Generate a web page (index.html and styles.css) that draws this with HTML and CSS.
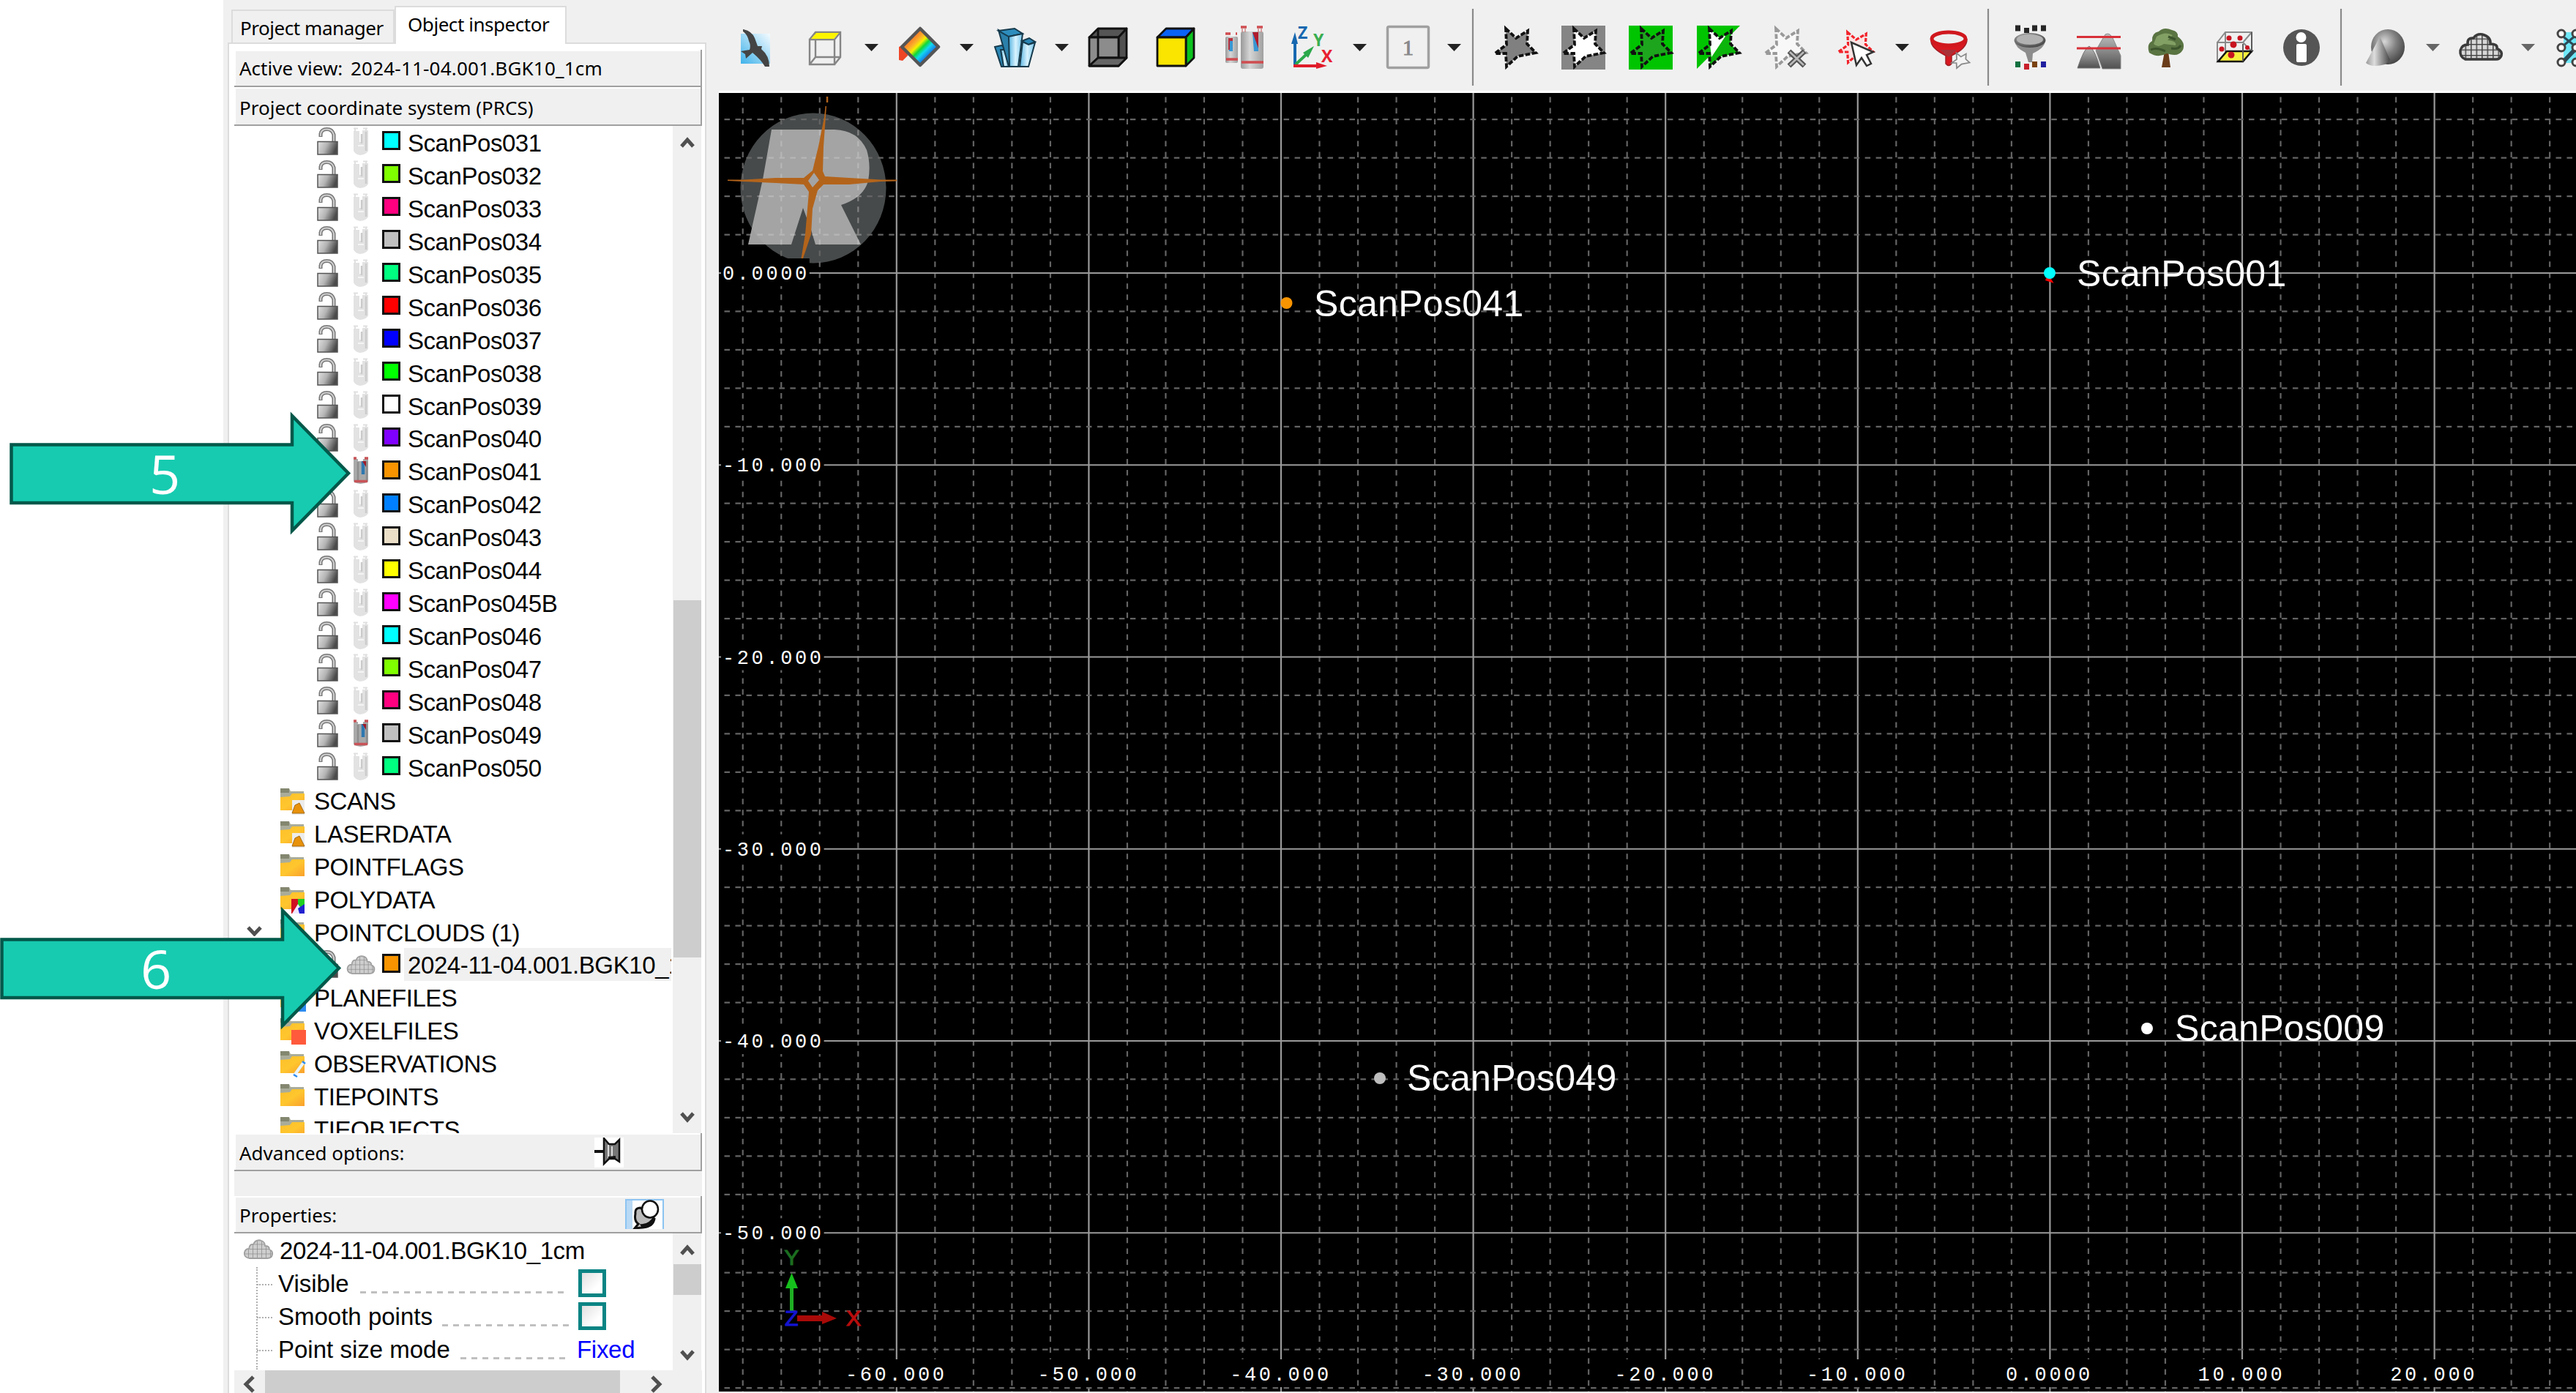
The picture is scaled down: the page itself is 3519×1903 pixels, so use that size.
FILE: index.html
```html
<!DOCTYPE html>
<html lang="en">
<head>
<meta charset="utf-8">
<title>Object inspector</title>
<link rel="stylesheet" href="styles.css">
</head>
<body>
<svg class="defs" width="0" height="0">
  <defs>
    <linearGradient id="gLock" x1="0" x2="1" y1="0" y2=".3"><stop offset="0" stop-color="#e4e4e4"/><stop offset=".5" stop-color="#b4b4b4"/><stop offset="1" stop-color="#4a4a4a"/></linearGradient>
    <linearGradient id="gFolder" x1="0" x2="1" y1="0" y2="1"><stop offset="0" stop-color="#fdc02a"/><stop offset=".5" stop-color="#ffc62e"/><stop offset="1" stop-color="#f9a02c"/></linearGradient>
    <linearGradient id="gSky" x1="1" x2="0" y1="0" y2="1"><stop offset="0" stop-color="#f4fbff"/><stop offset="1" stop-color="#3fb2ea"/></linearGradient>
    <linearGradient id="gRain" x1=".2" y1=".2" x2=".8" y2=".8"><stop offset="0" stop-color="#f4582a"/><stop offset=".3" stop-color="#fbb32a"/><stop offset=".42" stop-color="#f8f000"/><stop offset=".56" stop-color="#10d838"/><stop offset=".7" stop-color="#10d8f0"/><stop offset="1" stop-color="#2038e0"/></linearGradient>
    <linearGradient id="gIce" x1="0" x2="1"><stop offset="0" stop-color="#58b4e0"/><stop offset=".5" stop-color="#d8f3ff"/><stop offset="1" stop-color="#70c2e8"/></linearGradient>
    <linearGradient id="gTube" x1="0" x2="1"><stop offset="0" stop-color="#999"/><stop offset=".4" stop-color="#d6d6d6"/><stop offset="1" stop-color="#a0a0a0"/></linearGradient>
    <linearGradient id="gMount" x1="0" x2="0" y1="0" y2="1"><stop offset="0" stop-color="#c0c0c0"/><stop offset="1" stop-color="#505050"/></linearGradient>
    <radialGradient id="gBall" cx=".4" cy=".35" r=".7"><stop offset="0" stop-color="#d8d8d8"/><stop offset=".5" stop-color="#808080"/><stop offset="1" stop-color="#404040"/></radialGradient>
    <linearGradient id="gCone" x1="0" x2="1"><stop offset="0" stop-color="#999"/><stop offset=".35" stop-color="#ddd"/><stop offset="1" stop-color="#444"/></linearGradient>
    <pattern id="mesh" width="6" height="6.5" patternUnits="userSpaceOnUse"><rect width="6" height="6.5" fill="#cecece"/><path d="M0 0H6M0 0V6.5" stroke="#8c8c8c" stroke-width="1.5"/></pattern>
    <pattern id="meshDark" width="7.5" height="7.5" patternUnits="userSpaceOnUse"><rect width="7.5" height="7.5" fill="#d8d8d8"/><path d="M0 0H7.5M0 0V7.5" stroke="#444" stroke-width="3"/></pattern>

    <symbol id="lock" viewBox="0 0 30 38"><path d="M5 13V9Q6 2.500 13.500 2.500T23 10V20" fill="none" stroke="#777" stroke-width="5"/><path d="M5 12V9Q6 2.500 13.500 2.500T23 10V20" fill="none" stroke="#cfcfcf" stroke-width="2"/><rect x="1" y="19.500" width="27" height="17.500" fill="url(#gLock)" stroke="#555" stroke-width="1.500"/></symbol>
    <symbol id="scan" viewBox="0 0 22 38"><path d="M1 5V32Q3 37 10 38Q19 37 21 32V4H13V20H9V5z" fill="#e2e2e2"/><path d="M1 1.500H7M14 1.500H20M3 2V6M18 2V6" stroke="#e0e0e0" stroke-width="2"/><path d="M12 9V22M18 6V32" stroke="#cbcbcb" stroke-width="2.500"/><path d="M7 25H15" stroke="#f4f4f4" stroke-width="2"/></symbol>
    <symbol id="scanOn" viewBox="0 0 22 38"><path d="M1 3V34Q10 40 21 34V3H14V6H7V3z" fill="#a9a9a9"/><path d="M7 7V32M19 6V32" stroke="#8e8e8e" stroke-width="2.500"/><path d="M1 2H5M16 2H21M2 33.500H20" stroke="#c85458" stroke-width="3.500"/><path d="M14 6V24" stroke="#2f78b0" stroke-width="4.500"/><path d="M13 6H18V14z" fill="#a01c28"/></symbol>
    <symbol id="cloud" viewBox="0 0 40 27"><path d="M8 26Q0 25 1 18Q2 13 7 13Q8 6 13 7Q16 0 23 1.500Q29 3 29 9Q35 9 35 14Q40 16 39 21Q38 26 32 26z" fill="url(#mesh)" stroke="#a0a0a0" stroke-width="1.800"/></symbol>
    <symbol id="folder" viewBox="0 0 36 38"><path d="M1 1H13L15 5H33V30H1z" fill="#a9ac9a"/><path d="M1 1H13V7H1z" fill="#84876f"/><path d="M1 13L14 12L17 8H34V31H1z" fill="url(#gFolder)"/></symbol>
    <path id="star" d="M15 1L29 14L45 4L44 22L56 34L31 39L16 53L15 35L0 35L16 23z"/>
    <path id="dd" d="M0 0H19L9.500 10z"/>
  </defs>
</svg>

<div class="page">
  <aside class="sidebar">
    <nav class="tabs">
      <div class="tab">Project manager</div>
      <div class="tab tab-on">Object inspector</div>
    </nav>
    <div class="sheet">
      <div class="bar bar-view"><span class="tx-view">Active view: <b>2024-11-04.001.BGK10_1cm</b></span></div>
      <div class="bar bar-cs"><span class="tx-cs">Project coordinate system (PRCS)</span></div>
      <div class="scrollbox tree-box">
        <div class="tree" id="tree"></div>
        <div class="vbar tree-bar">
          <svg width="38" height="46" viewBox="0 0 38 46"><path d="M11 28L19 19L27 28" class="chev"/></svg>
          <div class="thumb tree-thumb"></div>
          <svg width="38" height="46" viewBox="0 0 38 46"><path d="M11 19L19 28L27 19" class="chev"/></svg>
        </div>
      </div>
      <div class="bar bar-adv"><span>Advanced options:</span>
        <svg class="pin1" width="40" height="41" viewBox="0 0 40 41"><rect width="40" height="41" fill="#fff"/><path d="M0 19H13" stroke="#111" stroke-width="4"/><path d="M13 1L20 9H28L34 3V33L28 29H20L13 36z" fill="#777" stroke="#111" stroke-width="2.500"/><path d="M19 10V28M24 12V26" stroke="#ddd" stroke-width="2"/><path d="M19 28L29 27" stroke="#111" stroke-width="4"/></svg>
      </div>
      <div class="gap"></div>
      <div class="bar bar-prop"><span>Properties:</span>
        <svg class="pin2" width="53" height="41" viewBox="0 0 53 41"><rect x="1" y="1" width="51" height="42" fill="#fff" stroke="#8cc4f2" stroke-width="2"/><rect x="2" y="2" width="8" height="39" fill="#b9d9f5"/><path d="M14 20Q13 12 21 12L40 27Q38 38 24 39L13 40L18 34Q12 30 14 20z" fill="#bbb" stroke="#111" stroke-width="3"/><path d="M20 34Q32 36 40 22V31Q34 40 23 40z" fill="#111"/><ellipse cx="34" cy="14" rx="11" ry="11.500" fill="#fff" stroke="#111" stroke-width="2.500"/></svg>
      </div>
      <div class="scrollbox prop-box">
        <div class="props">
          <div class="prow head"><svg width="40" height="27"><use href="#cloud"/></svg><span class="tx-cloud">2024-11-04.001.BGK10_1cm</span></div>
          <div class="prow"><i class="tick"></i><span>Visible</span><i class="dots d1"></i><i class="check"></i></div>
          <div class="prow"><i class="tick"></i><span>Smooth points</span><i class="dots d2"></i><i class="check"></i></div>
          <div class="prow"><i class="tick"></i><span>Point size mode</span><i class="dots d3"></i><span class="fixed">Fixed</span></div>
        </div>
        <div class="vbar">
          <svg width="38" height="42" viewBox="0 0 38 42"><path d="M11 28L19 19L27 28" class="chev"/></svg>
          <div class="thumb prop-thumb"></div>
          <svg width="38" height="42" viewBox="0 0 38 42"><path d="M11 16L19 25L27 16" class="chev"/></svg>
        </div>
      </div>
      <div class="hbar">
        <svg width="42" height="31" viewBox="0 0 42 31"><path d="M26 9L16 19L26 29" class="chev"/></svg>
        <div class="hthumb"></div>
        <svg class="hr" width="42" height="31" viewBox="0 0 42 31"><path d="M10 9L20 19L10 29" class="chev"/></svg>
      </div>
    </div>
  </aside>

  <main class="work">
    <div class="toolbar">
      <svg width="98" height="124" viewBox="982 0 98 124"><rect x="1012" y="46" width="40" height="41" fill="url(#gSky)"/><path d="M1015 40Q1027 42 1031 52L1035 63L1041 63L1040 67Q1051 76 1051 91L1045 91Q1040 82 1028 72L1019 80L1018 74L1012 70L1024 68Q1026 62 1023 56Q1021 47 1015 43z" fill="#444"/></svg>
      <svg width="85" height="124" viewBox="1080 0 85 124"><path d="M1106 54H1140V88H1106zM1106 54L1114 44H1148V78L1140 88M1114 44V78H1148M1106 88L1114 78M1140 54L1148 44" fill="none" stroke="#858585" stroke-width="2.400"/><path d="M1108 53L1115 45H1146L1139 53z" fill="#fdf500"/></svg>
      <svg width="45" height="124" viewBox="1165 0 45 124"><use href="#dd" x="1181" y="60"/></svg>
      <svg width="90" height="124" viewBox="1210 0 90 124"><path d="M1228 64L1238 60L1240 76L1233 83L1228 82z" fill="#ef4526"/><path d="M1257 39L1282 64L1257 89L1232 64z" fill="url(#gRain)" stroke="#555" stroke-width="4.500" stroke-linejoin="round"/></svg>
      <svg width="40" height="124" viewBox="1300 0 40 124"><use href="#dd" x="1311" y="60"/></svg>
      <svg width="90" height="124" viewBox="1340 0 90 124"><g stroke="#163a4c" stroke-width="2"><path d="M1359 64L1368 91H1377L1377 67L1368 62z" fill="#2a86b4"/><path d="M1367 68H1378V91H1371z" fill="url(#gIce)"/><path d="M1364 41L1378 91H1380L1380 50z" fill="#2a80aa"/><path d="M1364 42L1386 39L1397 46L1378 50z" fill="#2d8dbd"/><path d="M1378 50L1397 46L1391 91H1379z" fill="url(#gIce)"/><path d="M1396 56L1406 52L1414 57L1405 61z" fill="#2a86b4"/><path d="M1397 57L1405 61L1414 58L1405 91H1393z" fill="url(#gIce)"/></g></svg>
      <svg width="40" height="124" viewBox="1430 0 40 124"><use href="#dd" x="1441" y="60"/></svg>
      <svg width="90" height="124" viewBox="1470 0 90 124"><g stroke="#111" stroke-width="2.800" stroke-linejoin="round"><path d="M1488 51L1500 39H1539L1528 51z" fill="#555"/><path d="M1528 51L1539 39V79L1528 90z" fill="#505050"/><path d="M1488 51H1528V90H1488z" fill="#8c8c8c"/><path d="M1500 51V79H1528M1488 90L1500 79M1500 39V51" fill="none"/><path d="M1488 90L1500 79H1539L1528 90z" fill="#666"/></g></svg>
      <svg width="90" height="124" viewBox="1560 0 90 124"><g stroke="#111" stroke-width="2.800" stroke-linejoin="round"><path d="M1581 51L1593 39H1631L1620 51z" fill="#0b63f6"/><path d="M1620 51L1631 39V79L1620 90z" fill="#0cc31e"/><path d="M1581 51H1620V90H1581z" fill="#f9e500"/></g></svg>
      <svg width="95" height="124" viewBox="1650 0 95 124"><rect x="1674" y="50" width="17" height="36" rx="2" fill="url(#gTube)"/><rect x="1695" y="43" width="31" height="51" rx="3" fill="url(#gTube)"/><path d="M1674 46H1681M1688 46H1690M1695 37H1703M1717 37H1725M1675 81H1691M1696 85H1726" stroke="#cf4c50" stroke-width="3.500"/><path d="M1697 38V44M1701 38V44M1719 38V44M1723 38V44" stroke="#d08888" stroke-width="1.500"/><path d="M1711 44H1719V70H1713z" fill="#3a96d2"/><path d="M1711 44H1719V66z" fill="#b01c2c"/><path d="M1678 52H1684V70H1679z" fill="#3a96d2"/><path d="M1678 52H1684V56H1680V68H1678z" fill="#b8303c"/></svg>
      <svg width="90" height="124" viewBox="1745 0 90 124"><path d="M1769 90V56" stroke="#1768b0" stroke-width="4"/><path d="M1764 60L1769 44L1773 60z" fill="#1768b0"/><path d="M1770 88L1786 73" stroke="#2ba84a" stroke-width="4"/><path d="M1780 72L1795 63L1787 79z" fill="#2ba84a"/><path d="M1767 90H1800" stroke="#e01c2a" stroke-width="4"/><path d="M1798 85L1813 90L1798 94z" fill="#e01c2a"/><g class="axis-tx"><text x="1773" y="53" fill="#1768b0">Z</text><text x="1794" y="63" fill="#3aae50">Y</text><text x="1805" y="85" fill="#e82030">X</text></g></svg>
      <svg width="45" height="124" viewBox="1835 0 45 124"><use href="#dd" x="1848" y="60"/></svg>
      <svg width="85" height="124" viewBox="1880 0 85 124"><rect x="1895.500" y="36.500" width="56" height="56" rx="2" fill="none" stroke="#a0a0a0" stroke-width="3.500"/><text class="one" x="1916" y="75">1</text></svg>
      <svg width="42" height="124" viewBox="1965 0 42 124"><use href="#dd" x="1977" y="60"/></svg>
      <svg width="10" height="124" viewBox="2007 0 10 124"><path d="M2012 12V117" class="sep"/></svg>
      <svg width="98" height="124" viewBox="2017 0 98 124"><use href="#star" x="2042" y="38" class="star" fill="#808080"/></svg>
      <svg width="95" height="124" viewBox="2115 0 95 124"><rect x="2133" y="35" width="60" height="60" fill="#858585"/><use href="#star" x="2135" y="38" class="star" fill="#fff"/></svg>
      <svg width="90" height="124" viewBox="2210 0 90 124"><rect x="2225" y="35" width="60" height="60" fill="#00c400"/><use href="#star" x="2227" y="38" class="star" fill="#1da51d"/></svg>
      <svg width="95" height="124" viewBox="2300 0 95 124"><path d="M2318 35H2377L2318 94z" fill="#00c400"/><use href="#star" x="2320" y="38" fill="#0cb50c"/><path d="M2335 39L2349 52L2358 48L2338 78L2336 61z" fill="#fff"/><use href="#star" x="2320" y="38" class="star" fill="none"/></svg>
      <svg width="95" height="124" viewBox="2395 0 95 124"><use href="#star" x="2411" y="38" class="star faint" fill="#f8f8f8"/><path d="M2444 70L2465 90M2465 70L2444 90" stroke="#555" stroke-width="7"/><path d="M2445 71L2464 89M2464 71L2445 89" stroke="#bbb" stroke-width="2.500"/></svg>
      <svg width="85" height="124" viewBox="2490 0 85 124"><g transform="translate(2511 43) scale(.85 .8)"><use href="#star" class="star red" fill="#fbe4e4"/></g><path d="M2529 58L2559 71L2550 75L2556 87L2550 90L2543 79L2536 89z" fill="#fff" stroke="#333" stroke-width="2.500"/></svg>
      <svg width="45" height="124" viewBox="2575 0 45 124"><use href="#dd" x="2589" y="60"/></svg>
      <svg width="85" height="124" viewBox="2620 0 85 124"><path d="M2638 56Q2638 66 2658 76V87Q2662 92 2666 87V76Q2687 66 2687 54z" fill="#d81820" stroke="#a02028" stroke-width="1.500"/><path d="M2650 68L2673 68L2662 78z" fill="#a83238"/><ellipse cx="2662" cy="53" rx="23" ry="9" fill="#eee" stroke="#d0181e" stroke-width="5"/><g transform="translate(2666 72) scale(.44 .4)"><use href="#star" fill="#f4f4f4" stroke="#888" stroke-width="4"/></g></svg>
      <svg width="20" height="124" viewBox="2705 0 20 124"><path d="M2716 12V117" class="sep"/></svg>
      <svg width="95" height="124" viewBox="2725 0 95 124"><path d="M2753 34.500h7v8h-7zM2765 38h7v7h-7zM2776 34.500h7v8h-7zM2788 34.500h7v8h-7z" fill="#262626"/><path d="M2752 56Q2753 65 2767 72L2771 85H2776L2777 73Q2794 65 2794 55z" fill="#8c8c8c"/><ellipse cx="2773" cy="55" rx="21.500" ry="10" fill="url(#gBall)"/><ellipse cx="2773" cy="54" rx="18" ry="7" fill="#b2b2b2"/><path d="M2753 84h7v8h-7z" fill="#107040"/><path d="M2765 87h7v8h-7z" fill="#c8202c"/><path d="M2776 84h7v8h-7z" fill="#7a4210"/><path d="M2788 84h7v8h-7z" fill="#2020a0"/></svg>
      <svg width="95" height="124" viewBox="2820 0 95 124"><path d="M2838 93Q2847 66 2854 63Q2862 68 2869 93z" fill="url(#gMount)" stroke="#777"/><path d="M2863 69L2876 47Q2883 43 2888 56L2897 76V94H2872z" fill="url(#gMount)" stroke="#888"/><path d="M2837 50.500H2897M2837 66H2897" stroke="#d83038" stroke-width="3.200"/></svg>
      <svg width="90" height="124" viewBox="2915 0 90 124"><path d="M2953 92L2957 70H2962L2965 92z" fill="#6a3c1a"/><path d="M2936 72Q2932 60 2940 56Q2939 45 2949 43Q2956 36 2967 41Q2976 43 2975 50Q2986 58 2982 68Q2976 79 2960 73Q2948 80 2936 72z" fill="#5a7442"/><path d="M2946 50Q2958 42 2968 48L2961 55Q2974 56 2972 62L2956 60Q2948 66 2942 60z" fill="#83a064"/><path d="M2938 68Q2946 64 2958 70M2966 66Q2976 68 2979 62M2962 50L2972 54" stroke="#3c542c" stroke-width="3" fill="none"/></svg>
      <svg width="95" height="124" viewBox="3005 0 95 124"><path d="M3029 58L3040 44H3076V70L3064 58H3029V84M3064 58L3076 44M3040 44V71" fill="none" stroke="#8a8a8a" stroke-width="2"/><path d="M3030 84L3042 70H3076L3064 84z" fill="#f6ef3c" stroke="#111" stroke-width="2.500"/><path d="M3064 84V60M3076 70V44" stroke="#555" stroke-width="1.800"/><g fill="#c81420"><circle cx="3045" cy="52" r="3.500"/><circle cx="3060" cy="52" r="3.500"/><circle cx="3051" cy="61" r="4.500"/><circle cx="3035" cy="67" r="3.500"/><circle cx="3070" cy="65" r="3"/><circle cx="3048" cy="75" r="4.500"/></g></svg>
      <svg width="85" height="124" viewBox="3100 0 85 124"><circle cx="3144" cy="65" r="25" fill="#555"/><circle cx="3143.500" cy="51" r="7" fill="#fff"/><rect x="3137" y="60" width="14" height="25" rx="2" fill="#fff"/></svg>
      <svg width="25" height="124" viewBox="3185 0 25 124"><path d="M3198 12V117" class="sep"/></svg>
      <svg width="90" height="124" viewBox="3210 0 90 124"><ellipse cx="3262" cy="64" rx="23" ry="24" fill="url(#gBall)"/><path d="M3251 50L3232 86Q3240 93 3258 88L3265 82z" fill="url(#gCone)"/></svg>
      <svg width="45" height="124" viewBox="3300 0 45 124"><use href="#dd" x="3314" y="60" fill="#666"/></svg>
      <svg width="90" height="124" viewBox="3345 0 90 124"><path d="M3368 81Q3360 78 3361 69Q3363 61 3371 61Q3370 51 3379 52Q3383 46 3391 47Q3403 50 3402 60Q3412 60 3411 66Q3419 70 3417 76Q3415 81 3410 81z" fill="url(#meshDark)" stroke="#3a3a3a" stroke-width="3.500"/></svg>
      <svg width="35" height="124" viewBox="3435 0 35 124"><use href="#dd" x="3444" y="60" fill="#666"/></svg>
      <svg width="49" height="124" viewBox="3470 0 49 124"><rect x="3502" y="44" width="30" height="42" fill="#6ee8f8"/><path d="M3499 48L3519 64L3500 84M3500 64L3519 48M3504 84L3519 68" stroke="#2a4a58" stroke-width="3" fill="none"/><g fill="#fff" stroke="#444" stroke-width="3"><circle cx="3499" cy="46" r="5"/><circle cx="3499" cy="65" r="5"/><circle cx="3499" cy="85" r="5"/><circle cx="3519" cy="46" r="5"/><circle cx="3519" cy="65" r="5"/><circle cx="3519" cy="85" r="5"/></g></svg>
    </div>
    <svg class="view" width="2537" height="1774" viewBox="982 127 2537 1774">
      <rect x="982" y="127" width="2537" height="1774" fill="#000"/>
      <ellipse cx="1111" cy="257" rx="99.500" ry="102.500" fill="#474a4b"/>
      <g id="grid"></g>
      <path d="M1054 177H1140Q1172 178 1184 205Q1190 225 1186 247Q1180 270 1149 280L1176 334H1114L1108 314L1097 284L1081 334H1022L1042 245z" fill="#ababab" fill-opacity=".93"/>
      <g id="faint"></g>
      <path d="M1130 132V140" stroke="#b0621c" stroke-width="2.500"/>
      <path d="M1127.500 145L1129 145L1125 200L1124 234L1127 241L1160 243L1203 245.500H1225V247.500L1203 248L1160 252H1125L1117 260L1110 285L1108 320L1096 356L1093 362L1095 350L1100 320L1105 262L1098 252L1060 250L1015 248L994 247V245.500H1015L1060 243H1098L1110 233L1118 200L1126 160zM1112 236L1104 247L1110 256L1119 246z" fill="#b3641b" fill-rule="evenodd"/>
      <g id="ticks" class="ticks"></g>
      <g class="labels">
        <path d="M2798 378L2796 382L2802 384z" stroke="red" stroke-width="3"/>
        <circle cx="2800" cy="373" r="8" fill="#0ff"/><text x="2837" y="391">ScanPos001</text>
        <circle cx="1757.500" cy="414" r="8" fill="#f79400"/><text x="1795" y="432">ScanPos041</text>
        <circle cx="2933" cy="1405" r="8" fill="#fff"/><text x="2971" y="1422">ScanPos009</text>
        <circle cx="1885" cy="1473" r="8" fill="#bdbdbd"/><text x="1922" y="1490">ScanPos049</text>
      </g>
      <path d="M1081.500 1755V1792" stroke="#1fae24" stroke-width="5"/><path d="M1073 1760L1081.500 1739L1090 1760z" fill="#16c01c"/>
      <path d="M1089 1801H1126" stroke="#a80a08" stroke-width="8"/><path d="M1123 1792L1143 1801L1123 1809z" fill="#a80a08"/>
      <g class="gizmo"><text x="1081.500" y="1728" fill="#1c6e20" stroke="#1c6e20">Y</text><text x="1166" y="1811" fill="#b80c0c" stroke="#b80c0c">X</text><text x="1081.500" y="1811" fill="#1414d0" stroke="#1414d0">Z</text></g>
    </svg>
  </main>
</div>

<div class="callout c5"><svg width="474" height="170" viewBox="0 0 474 170"><path d="M2.500 45.500H386V6L463 84.500L386 163V125H2.500z"/></svg><span>5</span></div>
<div class="callout c6"><svg width="474" height="174" viewBox="0 0 474 174"><path d="M2.500 45.500H386V6L463 84.500L386 163V125H2.500z"/></svg><span>6</span></div>
<script src="app.js"></script>
</body>
</html>
```
FILE: styles.css
```css
* { box-sizing: border-box; }
body { margin: 0; background: #fff; overflow: hidden; color: #000; }
.defs { position: absolute; }
.page { display: flex; width: 3519px; height: 1903px; padding-left: 305px; overflow: hidden; }

.sidebar { width: 667px; background: #f0f0f0; display: flex; flex-direction: column; padding-left: 6px; font-family: "Noto Sans", sans-serif; font-size: 26px; }
.tabs { display: flex; align-items: flex-end; height: 58px; padding: 8px 0 0 5px; }
.tab { width: 223px; height: 45px; border: 2px solid #dcdcdc; border-bottom: 0; padding-left: 10px; line-height: 46px; white-space: nowrap; letter-spacing: -.45px; }
.tab-on { width: 235px; height: 52px; background: #fff; padding-left: 16px; line-height: 46px; margin-bottom: -2px; z-index: 1; }
.sheet { width: 654px; flex: 1; min-height: 0; background: #fff; border: 2px solid #dcdcdc; border-bottom: 0; padding: 8px 4px 0 7px; display: flex; flex-direction: column; }
.bar { flex: none; background: #f0f0f0; border: solid #a0a0a0; border-width: 0 2px 2px 0; box-shadow: inset 2px 2px #fff; padding: 1px 0 0 7px; white-space: nowrap; display: flex; align-items: center; }
.bar b { font-weight: 400; margin-left: 4px; letter-spacing: .2px; }
.bar-view { height: 51px; }
.bar-cs { height: 53px; padding-top: 4px; }
.bar-adv { height: 52px; padding-top: 3px; }
.bar-prop { height: 51px; padding-top: 3px; }
.gap { height: 34px; flex: none; background: #f0f0f0; }
.bar-adv .pin1 { margin-left: auto; margin-right: 105px; }
.bar-prop .pin2 { margin-left: auto; margin-right: 50px; align-self: flex-end; margin-bottom: 4px; }

.scrollbox { display: flex; flex: none; overflow: hidden; }
.tree-box { height: 1376px; }
.tree { width: 599px; overflow: hidden; font: 33px/47px "Liberation Sans", Arial, sans-serif; letter-spacing: -.45px; }
.row { display: flex; align-items: center; height: 44.94px; white-space: nowrap; }
.row svg { flex: none; }
.row .lock { margin-left: 113px; width: 30px; height: 38px; margin-top: -2px; }
.row .scan { margin-left: 19px; width: 22px; height: 38px; margin-top: -2px; }
.row .cl { margin-left: 10px; width: 40px; height: 26px; margin-top: 0; }
.sw { width: 25px; height: 26px; border: 3px solid #111; margin: -4px 0 0 18px; flex: none; }
.cl + .sw { margin-left: 9px; }
.name { margin-left: 5px; padding-left: 5px; height: 44.94px; flex: 1; overflow: hidden; }
.sel .name { background: #f0f0f0; margin-right: 2px; letter-spacing: -.4px; }
.exp { width: 23px; height: 14px; margin: -2px 0 0 16px; }
.fold { width: 36px; height: 38px; margin-left: 62px; margin-top: 3px; }
.exp + .fold { margin-left: 23px; }
.fold + .name { margin-left: 6px; }
.vbar { width: 39px; background: #f0f0f0; display: flex; flex-direction: column; align-items: center; }
.vbar svg:last-child { margin-top: auto; }
.thumb { width: 38px; background: #cdcdcd; }
.tree-thumb { height: 488px; margin-top: 602px; }
.prop-thumb { height: 42px; }
.chev { fill: none; stroke: #505050; stroke-width: 5; }

.prop-box { height: 187px; }
.props { width: 599px; font: 33px/47px "Liberation Sans", Arial, sans-serif; position: relative; }
.props::before { content: ""; position: absolute; left: 30px; top: 46px; height: 140px; border-left: 2px dotted #b0b0b0; }
.prow { display: flex; align-items: center; height: 44.94px; white-space: nowrap; }
.prow span { padding-top: 2px; }
.head svg { margin: -2px 9px 0 13px; }
.tx-cloud { letter-spacing: -.42px; }
.tick { width: 21px; border-top: 2px dotted #b0b0b0; margin: 6px 8px 0 31px; }
.dots { height: 3px; background: repeating-linear-gradient(90deg, #c0c0c0 0 8px, transparent 8px 15px); margin: 26px 0 0 auto; }
.d1 { width: 278px; margin-right: 20px; }
.d2 { width: 173px; margin-right: 13px; }
.d3 { width: 143px; margin-right: 16px; }
.check { width: 38px; height: 38px; border: 5px solid #0b8484; background: linear-gradient(135deg, #e0e0e0, #fff 70%); margin: 1px 91px 0 0; }
.fixed { color: #00f; width: 131px; letter-spacing: -.3px; }
.hbar { display: flex; background: #f0f0f0; flex: 1; }
.hthumb { width: 485px; background: #cdcdcd; }
.hr { margin-left: 34px; }

.work { flex: 1; min-width: 0; background: #f0f0f0; padding-left: 10px; }
.toolbar { display: flex; height: 127px; fill: #222; border-bottom: 3px solid #fff; }
.toolbar svg { flex: none; }
.view { display: block; }
.sep { stroke: #8a8a8a; stroke-width: 2.2; }
.star { stroke: #111; stroke-width: 3.8; stroke-dasharray: 6.5 2.5; }
.faint { stroke: #999; }
.red { stroke: #f2222a; }
.axis-tx { font: bold 23px "Open Sans", sans-serif; }
.one { font: 30px "Liberation Serif", serif; fill: #888; stroke: #888; }
.major { stroke: #9a9a9a; stroke-width: 2.2; }
.minor { stroke: #646464; stroke-width: 2.2; stroke-dasharray: 7.5 7.482; }
.ticks { font: 27px "Liberation Mono", monospace; fill: #fff; }
.ticks rect { fill: #000; }
.labels { font: 50px "Liberation Sans", Arial, sans-serif; }
.labels text { fill: #fff; letter-spacing: .3px; }
.gizmo { font: 30px "Liberation Sans", Arial, sans-serif; text-anchor: middle; stroke-width: 1.2; }

.callout { position: absolute; width: 474px; }
.callout svg { display: block; fill: #17cbb0; stroke: #03584a; stroke-width: 4.5; }
.callout span { position: absolute; top: 0; left: 0; color: #fff; font: 74px/170px "Open Sans", sans-serif; }
.c5 { left: 13px; top: 562px; }
.c5 span { left: 191px; }
.c6 { left: 0; top: 1238px; }
.c6 span { left: 192px; }
```
FILE: app.js
```js
var swatches = ['#00ffff', '#80ff00', '#ff0080', '#c0c0c0', '#00ff80', '#ff0000', '#0000ff', '#00ff00', '#ffffff', '#8000ff',
  '#f79400', '#0080ff', '#ebdfc8', '#ffff00', '#ff00ff', '#00ffff', '#80ff00', '#ff0080', '#c0c0c0', '#00ff80'];
var html = '';
swatches.forEach(function (color, i) {
  var n = 31 + i;
  html += '<div class="row"><svg class="lock"><use href="#lock"/></svg><svg class="scan"><use href="#' +
    (n === 41 || n === 49 ? 'scanOn' : 'scan') + '"/></svg><i class="sw" style="background:' + color +
    '"></i><span class="name">ScanPos0' + n + (n === 45 ? 'B' : '') + '</span></div>';
});
var mark = {
  scan: '<path d="M17 17H34V37H17z" fill="#ececec"/><path d="M17 35L21 24L27 21L34 35z" fill="#e8920c" stroke="#a86a10"/>',
  poly: '<path d="M16 17H25V37H16z" fill="#d01020"/><path d="M25 17H34V27L25 37z" fill="#20d020"/><path d="M17 37L25 24L34 37z" fill="#f0e8ff"/><path d="M25 30L34 24V37H27z" fill="#2020d0"/>',
  plane: '<path d="M20 20H36V37H20z" fill="#2d8cf0"/>',
  voxel: '<path d="M16 17H36V37H16z" fill="#ff5a3c"/>',
  line: '<path d="M20 34L33 16" stroke="#e8f4ff" stroke-width="4"/><path d="M19 33L24 36M31 15L35 18" stroke="#2d8cf0" stroke-width="2.5"/>'
};
function folder(name, m, open) {
  html += '<div class="row">' + (open ? '<svg class="exp" viewBox="0 0 23 14"><path d="M3 2L11.500 11L20 2" class="chev"/></svg>' : '') +
    '<svg class="fold" viewBox="0 0 36 38"><use href="#folder" width="36" height="38"/>' + (mark[m] || '') + '</svg><span class="name">' + name + '</span></div>';
}
folder('SCANS', 'scan');
folder('LASERDATA', 'scan');
folder('POINTFLAGS');
folder('POLYDATA', 'poly');
folder('POINTCLOUDS (1)', '', true);
html += '<div class="row sel"><svg class="lock"><use href="#lock"/></svg><svg class="cl"><use href="#cloud"/></svg><i class="sw" style="background:#f79400"></i><span class="name">2024-11-04.001.BGK10_1cm</span></div>';
folder('PLANEFILES', 'plane');
folder('VOXELFILES', 'voxel');
folder('OBSERVATIONS', 'line');
folder('TIEPOINTS');
folder('TIEOBJECTS');
document.getElementById('tree').innerHTML = html;

/* Grid: one major line per 10 units, four dashed minor lines between */
var X0 = 2800.4, Y0 = 373, STEP = 262.6, YSTEP = 262.25, grid = '', ticks = '', i, p;
for (i = -34; i <= 13; i++) {
  p = X0 + i * STEP / 5;
  grid += '<path class="' + (i % 5 ? 'minor' : 'major') + '" d="M' + p + ' ' + (i % 5 ? 132.5 : 127) + 'V1901"/>';
}
for (i = -4; i <= 29; i++) {
  p = Y0 + i * YSTEP / 5 + (i > 25 ? 2 : 0);
  grid += '<path class="' + (i % 5 ? 'minor' : 'major') + '" d="M' + (i % 5 ? 989.5 : 982) + ' ' + p + 'H3519"/>';
}
document.getElementById('grid').innerHTML = grid;
document.getElementById('faint').innerHTML = '<g opacity=".18">' + [1067.3, 1119.8, 1172.3].map(function (x) {
  return '<path class="minor" style="stroke:#fff" d="M' + x + ' 177.500V334"/>';
}).join('') + [215.6, 268.1, 320.6].map(function (y) {
  return '<path class="minor" style="stroke:#fff" d="M1034.500 ' + y + 'H1180"/>';
}).join('') + '</g>';
function tick(x, y, s) {
  ticks += '<rect x="' + (x - 2) + '" y="' + (y - 20) + '" width="' + (s.length * 19.8 + 2) + '" height="38"/>';
  ticks += '<text y="' + (y + 9) + '" x="' + s.split('').map(function (c, k) { return (x + k * 19.8).toFixed(1); }).join(' ') + '">' + s + '</text>';
}
for (i = 0; i <= 5; i++) tick(987, Y0 + i * YSTEP, i ? '-' + i * 10 + '.000' : '0.0000');
for (i = -6; i <= 2; i++) {
  var s = i ? i * 10 + '.000' : '0.0000';
  tick(X0 + i * STEP - s.length * 9.9 + (i < 0 ? -0.5 : -1), 1877, s);
}
document.getElementById('ticks').innerHTML = ticks;
```
